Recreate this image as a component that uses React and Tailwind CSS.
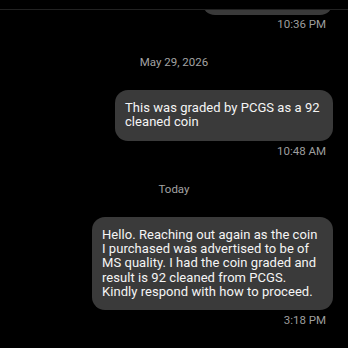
import React from 'react';

const font = { fontFamily: 'Roboto, "Liberation Sans", sans-serif' };

// outgoing message bubble plus its timestamp
const Outgoing = ({ text, time, maxW }) => (
  <div className="flex flex-col items-end pr-[15px]">
    <div
      className={`bg-[#3a3a3a] text-[#f5f5f5] text-[13px] leading-[14.35px] tracking-[0.05px] rounded-[13px] px-[10px] py-[11px] ${maxW}`}
    >
      {text}
    </div>
    <div className="mt-[3px] pr-[7px] text-[11.5px] leading-[14px] text-[#9e9e9e]">{time}</div>
  </div>
);

const DateLabel = ({ children }) => (
  <div className="text-center text-[11.5px] leading-[14px] text-[#a3a3a3]">{children}</div>
);

export default function App() {
  return (
    <div className="w-[348px] h-[348px] bg-black overflow-hidden" style={font}>
      <div className="h-[10px] border-b border-[#222222]" />
      <div className="flex flex-col items-end pr-[15px]">
        <div className="h-[5px] w-[131px] overflow-hidden">
          <div className="h-[30px] -mt-[25px] bg-[#3a3a3a] rounded-[13px]" />
        </div>
        <div className="mt-[2px] pr-[7px] text-[11.5px] leading-[14px] text-[#9e9e9e]">10:36 PM</div>
      </div>

      <div className="mt-[24px] mb-[21px]">
        <DateLabel>May 29, 2026</DateLabel>
      </div>
      <Outgoing text="This was graded by PCGS as a 92 cleaned coin" time="10:48 AM" maxW="max-w-[218px]" />

      <div className="mt-[24px] mb-[21px]">
        <DateLabel>Today</DateLabel>
      </div>
      <Outgoing
        text="Hello. Reaching out again as the coin I purchased was advertised to be of MS quality. I had the coin graded and result is 92 cleaned from PCGS. Kindly respond with how to proceed."
        time="3:18 PM"
        maxW="max-w-[241px]"
      />
    </div>
  );
}
